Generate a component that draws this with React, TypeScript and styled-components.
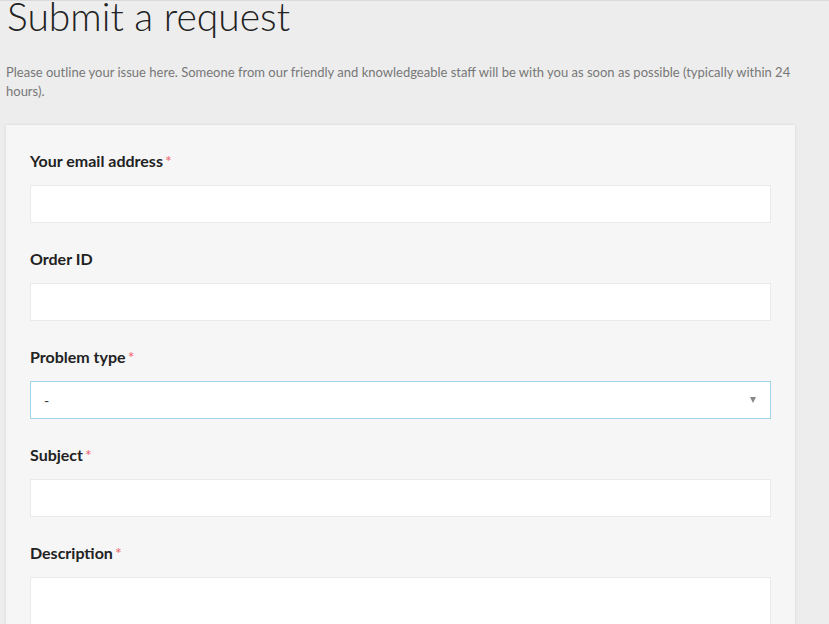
import styled, { createGlobalStyle } from "styled-components";

const GlobalStyle = createGlobalStyle`
    html, body {
        margin: 0;
        padding: 0;
        background: #ededed;
        font-family: Lato, "Open Sans", sans-serif;
        overflow: hidden;
    }

    body {
        border-top: 1px solid #dadada;
    }
`

const Page = styled.div`
    padding: 0 0 0 6px;
    width: 789px;
`

const Title = styled.h1`
    font-family: Lato, sans-serif;
    font-weight: 300;
    font-size: 39px;
    line-height: 42px;
    color: #222;
    margin: -6px 0 0 1px;
`

const Intro = styled.p`
    font-size: 13px;
    line-height: 19px;
    color: #777;
    margin: 26px 0 24px;
`

const Card = styled.form`
    background: #f6f6f6;
    box-shadow: 0 0 3px rgba(0, 0, 0, 0.1);
    padding: 26px 24px 0;
`

const Field = styled.div`
    margin-bottom: 26px;
`

const Label = styled.label`
    display: block;
    font-size: 16px;
    font-weight: 700;
    line-height: 20px;
    color: #222;
    margin-bottom: 14px;

    span {
        color: #f0636f;
        font-weight: 400;
        margin-left: 2px;
    }
`

const Input = styled.div<{ $focused?: boolean; $tall?: boolean }>`
    position: relative;
    box-sizing: border-box;
    height: ${(p) => (p.$tall ? "120px" : "38px")};
    background: #fff;
    border: 1px solid ${(p) => (p.$focused ? "#9fd5e6" : "#eaeaea")};
    display: flex;
    align-items: center;
    padding: 0 13px;
    font-size: 14px;
    color: #333;
`

const Arrow = styled.span`
    position: absolute;
    right: 14px;
    top: 15px;
    width: 0;
    height: 0;
    border-left: 3px solid transparent;
    border-right: 3px solid transparent;
    border-top: 6px solid #888;
`

type FieldProps = { label: string; required?: boolean; focused?: boolean; tall?: boolean; value?: string; select?: boolean }

const fields: FieldProps[] = [
    { label: "Your email address", required: true },
    { label: "Order ID" },
    { label: "Problem type", required: true, focused: true, value: "-", select: true },
    { label: "Subject", required: true },
    { label: "Description", required: true, tall: true },
]

export default function App() {
    return (
        <>
            <GlobalStyle />
            <Page>
                <Title>Submit a request</Title>
                <Intro>
                    Please outline your issue here. Someone from our friendly and knowledgeable staff will be with you as soon as possible (typically within 24 hours).
                </Intro>
                <Card>
                    {fields.map((f) => (
                        <Field key={f.label}>
                            <Label>
                                {f.label}
                                {f.required && <span>*</span>}
                            </Label>
                            <Input $focused={f.focused} $tall={f.tall}>
                                {f.value}
                                {f.select && <Arrow />}
                            </Input>
                        </Field>
                    ))}
                </Card>
            </Page>
        </>
    )
}
